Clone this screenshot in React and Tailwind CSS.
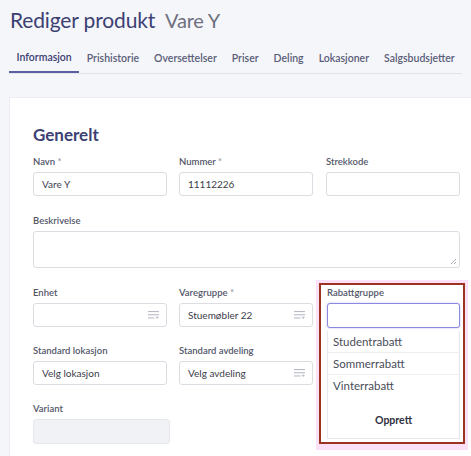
import React from 'react';

const tabs = ['Informasjon', 'Prishistorie', 'Oversettelser', 'Priser', 'Deling', 'Lokasjoner', 'Salgsbudsjetter'];

function SelectIcon() {
  return (
    <svg width="11" height="8" viewBox="0 0 11 8" className="shrink-0">
      <rect x="0" y="0" width="11" height="1.1" fill="#b8bbc6" />
      <rect x="0" y="3.2" width="11" height="1.1" fill="#b8bbc6" />
      <rect x="0" y="6.4" width="6.5" height="1.1" fill="#b8bbc6" />
      <path d="M7.5 5.8 L11 5.8 L9.25 8 Z" fill="#b8bbc6" />
    </svg>
  );
}

function Label({ children, required }) {
  return (
    <p className="text-[9.5px] font-semibold text-[#54576a] mb-[3px] h-[14px] leading-[14px] whitespace-nowrap">
      {children}
      {required && <span className="text-[#9a9cac]"> *</span>}
    </p>
  );
}

function Input({ value, select, className = 'w-[134px]' }) {
  return (
    <div className={`${className} h-[24px] bg-white border border-[#dcdde3] rounded-[3px] flex items-center justify-between pl-[8px] pr-[7px] text-[10px] text-[#3b3d4a]`}>
      <span>{value}</span>
      {select && <SelectIcon />}
    </div>
  );
}

export default function App() {
  return (
    <div className="w-[471px] h-[456px] overflow-hidden bg-[#f5f6fa]" style={{ fontFamily: 'Lato, "Open Sans", sans-serif' }}>
      {/* header */}
      <div className="pl-[10px] pt-[6px] h-[34px] flex items-baseline gap-[10px]">
        <h1 className="text-[21px] tracking-[-0.15px] text-[#3c4072] leading-[28px]">Rediger produkt</h1>
        <span className="text-[20px] tracking-[-0.2px] text-[#6e7080] leading-[28px]">Vare Y</span>
      </div>

      {/* tabs */}
      <div className="mx-[9px] mt-[11px] flex border-b border-[#e3e4ea] text-[10.5px] font-semibold text-[#5a5d78]">
        {tabs.map((t, i) => (
          <div
            key={t}
            className={`h-[28px] flex items-center px-[7.5px] whitespace-nowrap ${i === 0 ? 'border-b-2 border-[#5b5fa0] text-[#3c4072] -mb-px' : ''}`}
          >
            {t}
          </div>
        ))}
      </div>

      {/* card */}
      <div className="ml-[9px] mt-[23px] bg-white border-l border-t border-[#eceef3] pt-[27px] pl-[23px] h-[400px]">
        <h2 className="text-[17px] font-bold text-[#3c4072] leading-[20px] mb-[10px]">Generelt</h2>

        <div className="flex gap-[12px]">
          <div>
            <Label required>Navn</Label>
            <Input value="Vare Y" />
          </div>
          <div>
            <Label required>Nummer</Label>
            <Input value="11112226" />
          </div>
          <div className="ml-px">
            <Label>Strekkode</Label>
            <Input value="" />
          </div>
        </div>

        <div className="mt-[18px]">
          <Label>Beskrivelse</Label>
          <div className="w-[427px] h-[37px] bg-white border border-[#dcdde3] rounded-[3px] relative">
            <svg width="7" height="7" viewBox="0 0 7 7" className="absolute right-[2px] bottom-[2px]">
              <path d="M6 1 L1 6 M6 4 L4 6" stroke="#a0a2ad" strokeWidth="0.8" />
            </svg>
          </div>
        </div>

        <div className="flex gap-[12px] mt-[18px]">
          <div className="w-[134px] shrink-0">
            <Label>Enhet</Label>
            <Input value="" select />
            <div className="mt-[17px]">
              <Label>Standard lokasjon</Label>
              <Input value="Velg lokasjon" />
            </div>
            <div className="mt-[17px]">
              <Label>Variant</Label>
              <div className="w-[137px] h-[25px] bg-[#f1f2f5] border border-[#e6e7ec] rounded-[3px]" />
            </div>
          </div>
          <div className="w-[134px] shrink-0">
            <Label required>Varegruppe</Label>
            <Input value="Stuemøbler 22" select />
            <div className="mt-[17px]">
              <Label>Standard avdeling</Label>
              <Input value="Velg avdeling" select />
            </div>
          </div>

          {/* highlighted dropdown */}
          <div className="-ml-[9px] -mt-[6px] pt-[3px] px-[3px] pb-[6px] bg-[#fbe1f7] self-start">
            <div className="w-[146px] border-2 border-[#9b3320] bg-white pl-[6px] pt-px pb-[3px]">
              <Label>Rabattgruppe</Label>
              <div className="w-[133px] h-[25px] bg-white border border-[#8e89e0] rounded-[3px] shadow-[0_0_2px_#b9b5ef]" />
              <div className="w-[133px] mt-[3px] border border-t-0 border-[#e7e8ee] text-[11.5px] text-[#4a4c58] bg-white">
                <div className="h-[22px] flex items-center px-[5px] border-b border-[#eceef2]">Studentrabatt</div>
                <div className="h-[22px] flex items-center px-[5px] border-b border-[#eceef2]">Sommerrabatt</div>
                <div className="h-[22px] flex items-center px-[5px]">Vinterrabatt</div>
                <div className="h-[41px] pt-[6px] flex items-center justify-center font-bold text-[#2f3140] text-[10.5px]">Opprett</div>
              </div>
            </div>
          </div>
        </div>
      </div>
    </div>
  );
}
